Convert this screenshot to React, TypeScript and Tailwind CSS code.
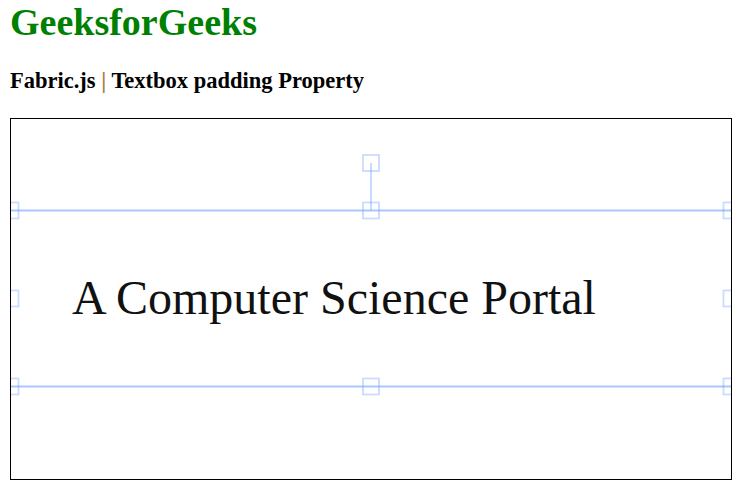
import React from "react";

const handles: [number, number][] = [
  [-0.5, 91.5],
  [360, 91.5],
  [720.5, 91.5],
  [-0.5, 179.5],
  [720.5, 179.5],
  [-0.5, 267.5],
  [360, 267.5],
  [720.5, 267.5],
  [360, 44],
];

export default function App() {
  return (
    <div className="min-h-[496px] w-[742px] bg-white pl-[10px]" style={{ fontFamily: '"Liberation Serif", "Times New Roman", serif' }}>
      <h1 className="m-0 text-[38px] font-bold leading-[44px] text-[#008000]">GeeksforGeeks</h1>
      <h3 className="m-0 mt-[24px] text-[22.5px] font-bold leading-[26px] text-black">
        Fabric.js <span className="text-[#a57d35]">|</span> Textbox padding Property
      </h3>
      <div className="relative mt-[24px] h-[362px] w-[722px] overflow-hidden border border-black bg-white">
        <div className="absolute left-[61px] top-[155px] whitespace-nowrap text-[48px] leading-[48px] text-[#111]">
          A Computer Science Portal
        </div>
        <svg className="absolute left-0 top-0" width="720" height="360" viewBox="0 0 720 360">
          <line x1="-2" y1="91.5" x2="722" y2="91.5" stroke="rgba(102,153,255,0.55)" strokeWidth="1.8" />
          <line x1="-2" y1="267.5" x2="722" y2="267.5" stroke="rgba(102,153,255,0.55)" strokeWidth="1.8" />
          <line x1="360" y1="44" x2="360" y2="91.5" stroke="rgba(102,153,255,0.6)" strokeWidth="1.2" />
          {handles.map(([x, y], i) => (
            <rect
              key={i}
              x={x - 8}
              y={y - 8}
              width="16"
              height="16"
              fill="none"
              stroke="rgba(102,153,255,0.35)"
              strokeWidth="1.8"
            />
          ))}
        </svg>
      </div>
    </div>
  );
}
